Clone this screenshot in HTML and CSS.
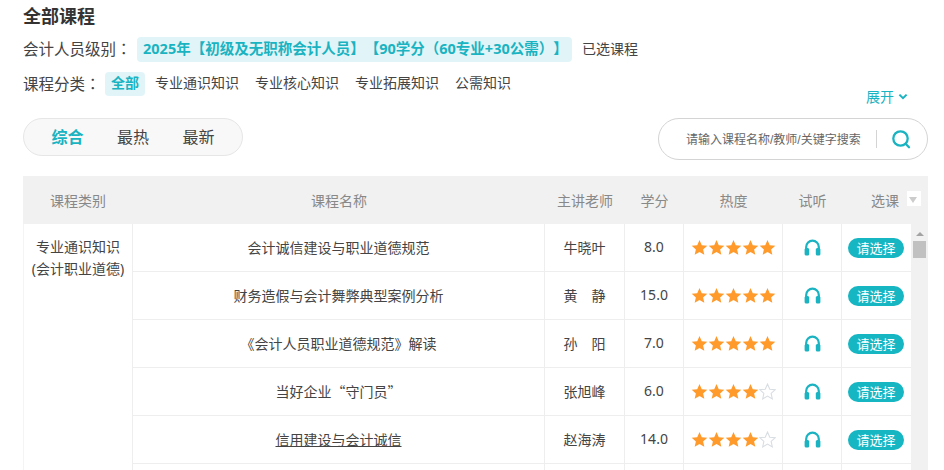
FILE: index.html
```html
<!DOCTYPE html>
<html lang="zh-CN">
<head>
    <meta charset="UTF-8">
    <title>全部课程</title>
    <link rel="stylesheet" href="styles.css">
</head>
<body>
    <svg class="defs" width="0" height="0">
        <symbol id="star" viewBox="0 0 24 24">
            <path d="M12 1.5l3.2 7.2 7.8.8-5.9 5.2 1.7 7.7L12 18.4l-6.8 4 1.7-7.7L1 9.5l7.8-.8z"/>
        </symbol>
        <symbol id="phones" viewBox="0 0 17 17">
            <path class="band" d="M2.2 10V8a6.3 6.3 0 0 1 12.6 0v2"/>
            <rect x="0.6" y="9" width="4.6" height="7.6" rx="1.5"/>
            <rect x="11.8" y="9" width="4.6" height="7.6" rx="1.5"/>
        </symbol>
    </svg>

    <main class="page">
        <h1 class="title">全部课程</h1>

        <div class="filter filter-level">
            <span class="filter-label">会计人员级别<span class="colon" lang="zh-TW">：</span></span>
            <span class="level-chip">2025年【初级及无职称会计人员】【90学分（60专业+30公需）】</span>
            <span class="level-link">已选课程</span>
        </div>

        <div class="filter filter-type">
            <span class="filter-label">课程分类<span class="colon" lang="zh-TW">：</span></span>
            <span class="type-item active">全部</span>
            <span class="type-item">专业通识知识</span>
            <span class="type-item">专业核心知识</span>
            <span class="type-item">专业拓展知识</span>
            <span class="type-item">公需知识</span>
        </div>

        <div class="expand-row">
            <span class="expand">展开
                <svg width="10" height="8" viewBox="0 0 10 8"><path d="M1.4 1.6L5 5.2l3.6-3.6"/></svg>
            </span>
        </div>

        <div class="toolbar">
            <div class="sort-tabs">
                <span class="sort-tab active">综合</span>
                <span class="sort-tab">最热</span>
                <span class="sort-tab">最新</span>
            </div>
            <div class="search">
                <span class="search-text">请输入课程名称/教师/关键字搜索</span>
                <span class="search-line"></span>
                <svg class="search-icon" width="20" height="20" viewBox="0 0 20 20">
                    <circle cx="9.5" cy="9.5" r="7.2"/>
                    <path d="M14.6 14.8l3.4 3.4"/>
                </svg>
            </div>
        </div>

        <div class="course-box">
            <table class="courses">
                <colgroup>
                    <col class="col-type">
                    <col class="col-name">
                    <col class="col-teacher">
                    <col class="col-score">
                    <col class="col-hot">
                    <col class="col-try">
                    <col class="col-pick">
                </colgroup>
                <thead>
                    <tr>
                        <th>课程类别</th>
                        <th>课程名称</th>
                        <th>主讲老师</th>
                        <th>学分</th>
                        <th>热度</th>
                        <th>试听</th>
                        <th class="th-pick">选课</th>
                    </tr>
                </thead>
                <tbody id="rows"></tbody>
            </table>
            <div class="scrollbar">
                <span class="scroll-up"></span>
                <span class="scroll-thumb"></span>
            </div>
            <span class="head-arrow"></span>
        </div>
    </main>

    <script>
        const courses = [
            { name: "会计诚信建设与职业道德规范", teacher: "牛晓叶", score: "8.0", stars: 5 },
            { name: "财务造假与会计舞弊典型案例分析", teacher: "黄　静", score: "15.0", stars: 5 },
            { name: "《会计人员职业道德规范》解读", teacher: "孙　阳", score: "7.0", stars: 5 },
            { name: "当好企业“守门员”", teacher: "张旭峰", score: "6.0", stars: 4 },
            { name: "信用建设与会计诚信", teacher: "赵海涛", score: "14.0", stars: 4, link: true },
            { name: "", teacher: "", score: "", stars: 0, blank: true }
        ];

        function starIcons(count) {
            let html = '';
            for (let i = 0; i < 5; i++) {
                html += `<svg class="star ${i < count ? 'on' : 'off'}" width="17" height="17"><use href="#star"/></svg>`;
            }
            return html;
        }

        const rows = document.getElementById('rows');
        courses.forEach((course, index) => {
            const tr = document.createElement('tr');
            tr.innerHTML = `
                ${index === 0 ? `<td class="type-cell" rowspan="${courses.length}">专业通识知识<br>(会计职业道德)</td>` : ''}
                <td class="text-cell name-cell"><span class="${course.link ? 'course-link' : ''}">${course.name}</span></td>
                <td class="text-cell">${course.teacher}</td>
                <td class="text-cell">${course.score}</td>
                <td>${course.blank ? '' : `<div class="stars">${starIcons(course.stars)}</div>`}</td>
                <td>${course.blank ? '' : '<svg class="phones" width="17" height="17"><use href="#phones"/></svg>'}</td>
                <td>${course.blank ? '' : '<span class="pick-btn">请选择</span>'}</td>
            `;
            rows.appendChild(tr);
        });
    </script>
</body>
</html>
```

FILE: styles.css
```css
html, body {
    height: 470px;
    overflow: hidden;
}

body {
    margin: 0;
    background-color: #fff;
    color: #444;
    font-family: "Noto Sans", "Noto Sans CJK SC", sans-serif;
    font-size: 14px;
    text-spacing-trim: space-all;
}

.defs {
    display: block;
    height: 0;
}

.page {
    padding: 0 16px 0 23px;
}

.title {
    margin: 0;
    height: 34px;
    font-size: 18px;
    line-height: 33px;
    font-weight: 700;
    color: #333;
}

.filter {
    display: flex;
}

.filter-label {
    font-size: 15.5px;
    color: #444;
}

.colon {
    font-family: "Noto Sans CJK TC", sans-serif;
}

.filter-level {
    height: 25px;
    margin-top: 3px;
    line-height: 23px;
}

.filter-level .filter-label {
    width: 114px;
}

.level-chip {
    height: 25px;
    padding: 0 6px;
    width: 435px;
    box-sizing: border-box;
    background-color: #e1f5f8;
    border-radius: 4px;
    color: #1ab3c1;
    font-size: 14.5px;
    font-weight: 700;
    white-space: nowrap;
}

.level-link {
    margin-left: 10px;
    font-size: 14px;
}

.filter-type {
    height: 24px;
    margin-top: 10px;
    line-height: 22px;
}

.filter-type .filter-label {
    width: 82px;
}

.type-item {
    margin-right: 16px;
    white-space: nowrap;
}

.type-item.active {
    width: 40px;
    margin-right: 10px;
    background-color: #e1f5f8;
    border-radius: 4px;
    color: #1ab3c1;
    font-weight: 700;
    text-align: center;
}

.expand-row {
    display: flex;
    justify-content: flex-end;
    height: 22px;
    margin-top: -10px;
    padding-right: 20px;
    padding-bottom: 10px;
}

.expand {
    display: flex;
    align-items: center;
    gap: 4px;
    color: #1ab3c1;
    line-height: 22px;
}

.expand svg {
    fill: none;
    stroke: #1ab3c1;
    stroke-width: 2;
}

.toolbar {
    display: flex;
    justify-content: space-between;
    align-items: flex-start;
    height: 58px;
}

.sort-tabs {
    display: flex;
    gap: 33.5px;
    box-sizing: border-box;
    width: 220px;
    height: 38px;
    padding-left: 27.5px;
    background-color: #f8f8f8;
    border: 1px solid #e6e6e6;
    border-radius: 19px;
    font-size: 16px;
    line-height: 36px;
}

.sort-tab.active {
    color: #1ab3c1;
    font-weight: 700;
}

.search {
    display: flex;
    align-items: center;
    box-sizing: border-box;
    width: 270px;
    height: 42px;
    padding-left: 27px;
    border: 1px solid #d4d4d4;
    border-radius: 21px;
}

.search-text {
    width: 174px;
    padding-bottom: 2px;
    font-family: "Liberation Sans", "Noto Sans CJK SC", sans-serif;
    font-size: 12px;
    color: #666;
    white-space: nowrap;
}

.search-line {
    width: 1px;
    height: 18px;
    margin-left: 16px;
    background-color: #d4d4d4;
}

.search-icon {
    margin-left: 14px;
    fill: none;
    stroke: #1ab3c1;
    stroke-width: 2.3;
    stroke-linecap: round;
}

.course-box {
    position: relative;
    display: flex;
    width: 905px;
    background-color: #f1f1f1;
}

.courses {
    width: 888px;
    table-layout: fixed;
    border-collapse: separate;
    border-spacing: 0;
    background-color: #fff;
}

.col-type { width: 110px; }
.col-name { width: 412px; }
.col-teacher { width: 80px; }
.col-score { width: 59px; }
.col-hot { width: 99px; }
.col-try { width: 59px; }
.col-pick { width: 69px; }

.courses th {
    height: 48px;
    padding: 0;
    background-color: #f1f1f1;
    color: #888;
    font-weight: 400;
}

.courses .th-pick {
    padding-left: 17px;
    white-space: nowrap;
}

.courses td {
    height: 47px;
    padding: 0;
    border-right: 1px solid #eee;
    border-bottom: 1px solid #eee;
    font-size: 14px;
    color: #444;
    text-align: center;
}

.courses td:last-child {
    border-right: none;
}

.courses .text-cell {
    height: 45px;
    padding-bottom: 2px;
}

.courses .name-cell {
    font-family: "Noto Sans CJK SC", sans-serif;
}

.courses .type-cell {
    padding-top: 12px;
    border-left: 1px solid #f4f4f4;
    vertical-align: top;
    line-height: 22px;
}

.course-link {
    text-decoration: underline;
}

.stars {
    display: flex;
    justify-content: center;
}

.star {
    display: block;
}

.star.on {
    fill: #ff9a2b;
}

.star.off {
    fill: #fff;
    stroke: #d8dde2;
    stroke-width: 1.5;
}

.phones {
    display: block;
    margin: 0 auto;
    fill: #1ab3c1;
}

#phones .band {
    fill: none;
    stroke: #1ab3c1;
    stroke-width: 2.2;
}

.pick-btn {
    display: inline-block;
    width: 56px;
    height: 20px;
    margin-right: 1px;
    border-radius: 10px;
    background-color: #17b6c3;
    color: #fff;
    font-size: 13px;
    line-height: 20px;
    vertical-align: middle;
}

.scrollbar {
    display: flex;
    flex-direction: column;
    align-items: center;
    width: 17px;
    padding-top: 48px;
}

.scroll-up {
    width: 0;
    height: 0;
    margin-top: 8px;
    border-left: 4px solid transparent;
    border-right: 4px solid transparent;
    border-bottom: 4px solid #a3a3a3;
}

.scroll-thumb {
    width: 13px;
    height: 17px;
    margin-top: 5px;
    background-color: #c1c1c1;
}

.head-arrow {
    position: absolute;
    top: 15px;
    right: 7px;
    width: 14px;
    height: 15px;
    background-color: #fff;
}

.head-arrow::after {
    content: "";
    position: absolute;
    top: 6px;
    left: 2px;
    border-left: 4.5px solid transparent;
    border-right: 4.5px solid transparent;
    border-top: 6px solid #ccc;
}
```
